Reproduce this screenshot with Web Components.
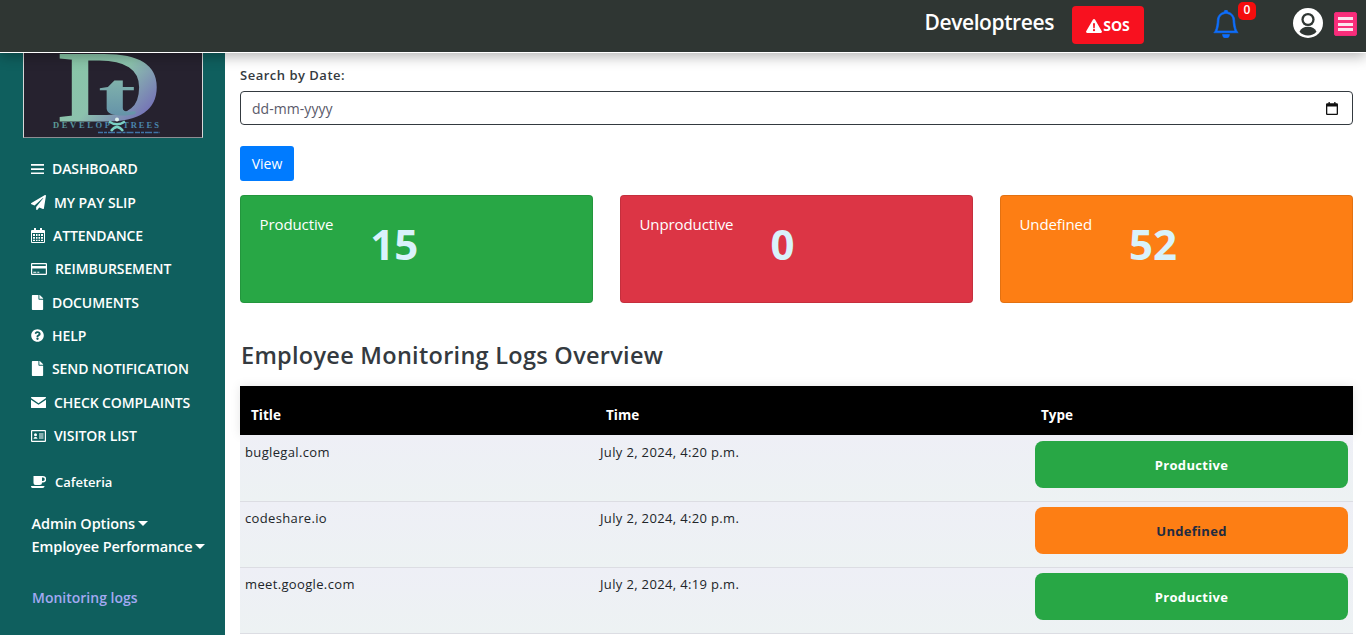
<!DOCTYPE html>
<html lang="en">
<head>
<title>Monitoring logs</title>
<style>
    html, body { margin: 0; height: 635px; overflow: hidden; background: #fff; font-family: "Open Sans", "Noto Sans", sans-serif; }
    .cards { display: grid; grid-template-columns: repeat(3, 1fr); gap: 27px; margin-top: 14px; }
</style>
</head>
<body>

<app-shell>
    <app-header slot="top"></app-header>
    <side-nav slot="side">
        <nav-item icon="bars" gap="8">DASHBOARD</nav-item>
        <nav-item icon="plane" gap="8">MY PAY SLIP</nav-item>
        <nav-item icon="calendar" gap="8">ATTENDANCE</nav-item>
        <nav-item icon="card" gap="8">REIMBURSEMENT</nav-item>
        <nav-item icon="file" gap="8">DOCUMENTS</nav-item>
        <nav-item icon="help" gap="8">HELP</nav-item>
        <nav-item icon="file" gap="8">SEND NOTIFICATION</nav-item>
        <nav-item icon="mail" gap="8">CHECK COMPLAINTS</nav-item>
        <nav-item icon="idcard" gap="8">VISITOR LIST</nav-item>
    </side-nav>
    <date-search></date-search>
    <div class="cards">
        <stat-card label="Productive" value="15" color="#28a745"></stat-card>
        <stat-card label="Unproductive" value="0" color="#dc3545"></stat-card>
        <stat-card label="Undefined" value="52" color="#fd7e14"></stat-card>
    </div>
    <log-table>
        <log-row title="buglegal.com" time="July 2, 2024, 4:20 p.m." type="Productive"></log-row>
        <log-row title="codeshare.io" time="July 2, 2024, 4:20 p.m." type="Undefined"></log-row>
        <log-row title="meet.google.com" time="July 2, 2024, 4:19 p.m." type="Productive"></log-row>
    </log-table>
</app-shell>

<script>
    const FONT = '"Open Sans", "Noto Sans", sans-serif' ;

    const ICONS = {
        bars: `<svg viewBox="0 0 13 12" width="13" height="12"><path d="M0 1h13v1.7H0zM0 5.2h13v1.7H0zM0 9.4h13v1.7H0z"/></svg>`,
        plane: `<svg viewBox="0 0 512 512" width="15" height="15"><path d="M476 3.2L12.5 270.6c-18.1 10.4-15.8 35.6 2.2 43.2L121 358.4l287.3-253.2c5.5-4.9 13.3 2.6 8.6 8.3L176 407v80.5c0 23.6 28.5 32.9 42.5 15.8L282 426l124.6 52.2c14.2 6 30.4-2.9 33-18.2l72-432C515 7.8 493.3-6.8 476 3.2z"/></svg>`,
        calendar: `<svg viewBox="0 0 14 15" width="14" height="15"><path fill-rule="evenodd" d="M3 0h2v2h4V0h2v2h2a1 1 0 0 1 1 1v11a1 1 0 0 1-1 1H1a1 1 0 0 1-1-1V3a1 1 0 0 1 1-1h2zM1 5v9h12V5zM2 6h2v2H2zM5 6h1.500v2H5zM7.500 6H9v2H7.500zM10 6h2v2h-2zM2 9h2v1.800H2zM5 9h1.500v1.800H5zM7.500 9H9v1.800H7.500zM10 9h2v1.800h-2zM2 11.800h2V13H2zM5 11.800h1.500V13H5zM7.500 11.800H9V13H7.500zM10 11.800h2V13h-2z"/></svg>`,
        card: `<svg viewBox="0 0 16 12" width="16" height="12"><path fill-rule="evenodd" d="M1 0h14a1 1 0 0 1 1 1v10a1 1 0 0 1-1 1H1a1 1 0 0 1-1-1V1a1 1 0 0 1 1-1zM1.200 1.200v1.800h13.600V1.200zM1.200 5.600v5.200h13.600V5.600zM2.300 8.800h3v1h-3zM6.300 8.800h2v1h-2z"/></svg>`,
        file: `<svg viewBox="0 0 384 512" width="13" height="15"><path d="M224 136V0H24C10.700 0 0 10.700 0 24v464c0 13.300 10.700 24 24 24h336c13.300 0 24-10.700 24-24V160H248c-13.200 0-24-10.800-24-24zm160-14.100v6.100H256V0h6.100c6.400 0 12.500 2.500 17 7l97.900 98c4.500 4.500 7 10.600 7 16.900z"/></svg>`,
        help: `<svg viewBox="0 0 512 512" width="13" height="13"><path d="M504 256c0 136.997-111.043 248-248 248S8 392.997 8 256C8 119.083 119.043 8 256 8s248 111.083 248 248zM262.655 90c-54.497 0-89.255 22.957-116.549 63.758-3.536 5.286-2.353 12.415 2.715 16.258l34.699 26.310c5.205 3.947 12.621 3.008 16.665-2.122 17.864-22.658 30.113-35.797 57.303-35.797 20.429 0 45.698 13.148 45.698 32.958 0 14.976-12.363 22.667-32.534 33.976C247.128 238.528 216 254.941 216 296v4c0 6.627 5.373 12 12 12h56c6.627 0 12-5.373 12-12v-1.333c0-28.462 83.186-29.647 83.186-106.667 0-58.002-60.165-102-116.531-102zM256 338c-25.365 0-46 20.635-46 46 0 25.364 20.635 46 46 46s46-20.636 46-46c0-25.365-20.635-46-46-46z"/></svg>`,
        mail: `<svg viewBox="0 0 15 11" width="15" height="11"><path d="M.6 0h13.800a.6.6 0 0 1 .6.600v.5L7.500 6.300 0 1.100V.6A.6.6 0 0 1 .6 0zM0 2.700l7.500 5.100L15 2.700v7.700a.6.6 0 0 1-.6.600H.6a.6.6 0 0 1-.6-.6z"/></svg>`,
        idcard: `<svg viewBox="0 0 15 12" width="15" height="12"><path fill-rule="evenodd" d="M1 0h13a1 1 0 0 1 1 1v10a1 1 0 0 1-1 1H1a1 1 0 0 1-1-1V1a1 1 0 0 1 1-1zM1.200 1.200v9.600h12.600V1.200zM2.500 8.800c.2-1.300.9-1.900 2-1.900s1.800.6 2 1.900zM4.500 3.300a1.500 1.500 0 1 1 0 3 1.500 1.500 0 0 1 0-3zM8 3.500h4.500v1H8zM8 5.500h4.500v1H8zM8 7.500h4.500v1H8z"/></svg>`,
        coffee: `<svg viewBox="0 0 15 12" width="15" height="12"><path fill-rule="evenodd" d="M2.500 0H12a3 3 0 0 1 0 6.500h-1A2.500 2.500 0 0 1 8.500 9h-4A2 2 0 0 1 2.500 7zM11 1.500v3.500h1a1.700 1.700 0 0 0 0-3.500zM0 10h13.500c0 1.200-.8 2-2 2h-10C.6 12 0 11 0 10z"/></svg>`
    } ;

    class AppShell extends HTMLElement {
        constructor() {
            super() ;
            const shadow = this.attachShadow({mode: 'open'}) ;
            shadow.innerHTML = `
            <style>
                :host { display: grid; grid-template-columns: 225px 1fr; grid-template-rows: 53px 1fr; height: 635px; overflow: hidden; }
                .top { grid-column: 1 / 3; position: relative; z-index: 2; }
                main { padding: 12px 13px 0 15px; min-width: 0; }
            </style>
            <div class="top"><slot name="top"></slot></div>
            <slot name="side"></slot>
            <main>
                <slot></slot>
            </main>
            ` ;
        }
    }

    class AppHeader extends HTMLElement {
        constructor() {
            super() ;
            const shadow = this.attachShadow({mode: 'open'}) ;
            shadow.innerHTML = `
            <style>
                :host { display: flex; align-items: center; height: 52px; box-sizing: content-box; background: #2f3633; border-bottom: 1px solid #fff; box-shadow: 0 4px 12px rgba(0,0,0,.28); justify-content: flex-end; padding-right: 9px; }
                .brand { font: 600 21px ${FONT}; color: #fff; letter-spacing: -.4px; margin: 0 18px 8px 0; }
                .sos { display: flex; align-items: center; justify-content: center; width: 72px; height: 38px; background: #f8111f; border-radius: 4px; color: #fff; font: 700 14px ${FONT}; box-sizing: border-box; padding-top: 1px; margin: 0 70px 2px 0; }
                .bell { position: relative; width: 24px; height: 28px; margin: 0 55px 4px 0; }
                .bell svg { display: block; fill: #0d6efd; stroke: #0d6efd; stroke-width: .35; }
                .badge { position: absolute; left: 24px; top: -8px; width: 18px; height: 18px; border-radius: 5px; background: #f40d0d; color: #fff; font: 600 12px/16px ${FONT}; text-align: center; }
                .user { display: block; margin: 0 11px 6px 0; }
                .burger { width: 23px; height: 24px; box-sizing: border-box; background: #f92d7a; border: 1px solid #ee2a78; border-radius: 2px; padding: 4px 3px; margin-bottom: 4px; display: flex; flex-direction: column; justify-content: space-between; }
                .burger i { display: block; height: 3px; background: #fbe3ee; }
            </style>
            <div class="brand">Developtrees</div>
            <div class="sos">
                <svg viewBox="0 0 16 14" width="16" height="14" style="margin-right:1px"><path fill="#fff" fill-rule="evenodd" d="M8 0c.4 0 .8.200 1 .6l6.800 11.600c.4.800-.1 1.800-1 1.800H1.200c-.9 0-1.400-1-1-1.800L7 .6C7.200.2 7.600 0 8 0zM7 4.300l.3 5h1.400l.3-5zM8 10.100a1.100 1.100 0 1 0 0 2.200 1.100 1.100 0 0 0 0-2.200z"/></svg>
                <span>SOS</span>
            </div>
            <div class="bell">
                <svg viewBox="0 0 16 16" width="28" height="28" style="margin:0 -2px"><path d="M8 16a2 2 0 0 0 2-2H6a2 2 0 0 0 2 2zM8 1.918l-.797.161A4.002 4.002 0 0 0 4 6c0 .628-.134 2.197-.459 3.742-.16.767-.376 1.566-.663 2.258h10.244c-.287-.692-.502-1.490-.663-2.258C12.134 8.197 12 6.628 12 6a4.002 4.002 0 0 0-3.203-3.920L8 1.917zM14.220 12c.223.447.481.801.78 1H1c.299-.199.557-.553.78-1C2.680 10.200 3 6.880 3 6c0-2.420 1.720-4.440 4.005-4.901a1 1 0 1 1 1.990 0A5.002 5.002 0 0 1 13 6c0 .880.320 4.200 1.220 6z"/></svg>
                <span class="badge">0</span>
            </div>
            <svg class="user" viewBox="0 0 30 30" width="30" height="30">
                <circle cx="15" cy="15" r="15" fill="#fff"/>
                <circle cx="15" cy="11.500" r="6.600" fill="#2f3633"/>
                <circle cx="15" cy="11.500" r="4.300" fill="#fff"/>
                <path fill="#2f3633" d="M6.500 23.800c1.500-3.500 4.300-5 8.500-5s7 1.500 8.500 5c-2.200 2.500-5.200 3.700-8.500 3.700s-6.300-1.200-8.500-3.700z"/>
            </svg>
            <div class="burger"><i></i><i></i><i></i></div>
            ` ;
        }
    }

    class SideNav extends HTMLElement {
        constructor() {
            super() ;
            const shadow = this.attachShadow({mode: 'open'}) ;
            shadow.innerHTML = `
            <style>
                :host { display: block; background: #0f5f5e; color: #fff; overflow: hidden; }
                .logo { display: block; margin-left: 23px; width: 180px; height: 85px; background: #26222f; box-sizing: border-box; border: solid #d8d8d8; border-width: 0 1px 1px 1px; border-bottom-color: #8d8d93; }
                .items { padding: 14.100px 0 0 31px; }
                .cafe { display: flex; align-items: center; font: 600 13px/20px ${FONT}; margin: 19.500px 0 0 31px; }
                .cafe svg { fill: #fff; margin-right: 9px; }
                .opt { font: 600 14.500px/23px ${FONT}; margin-left: 31.500px; display: flex; align-items: center; letter-spacing: -.1px; }
                .opt::after { content: ""; border: 5px solid transparent; border-top-color: #fff; border-bottom-width: 0; margin-left: 3px; }
                .first { margin-top: 20px; }
                .active { font: 600 14px/20px ${FONT}; color: #a3a9f2; margin: 30px 0 0 32px; }
            </style>
            <svg class="logo" viewBox="0 0 178 84">
                <defs>
                    <linearGradient id="logoGrad" x1="0" y1="0" x2="1" y2="1">
                        <stop offset="0" stop-color="#86c8a3"/>
                        <stop offset=".5" stop-color="#8cc2ad"/>
                        <stop offset=".85" stop-color="#7267b8"/>
                    </linearGradient>
                    <linearGradient id="tGrad" x1="0" y1="0" x2="0" y2="1">
                        <stop offset="0" stop-color="#8fc4ad"/>
                        <stop offset="1" stop-color="#5c88a8"/>
                    </linearGradient>
                    <linearGradient id="wordGrad" x1="0" y1="0" x2="1" y2="0">
                        <stop offset="0" stop-color="#5f9e96"/>
                        <stop offset="1" stop-color="#4a86ad"/>
                    </linearGradient>
                </defs>
                <text x="33" y="67" font-family="Liberation Serif, serif" font-size="100" textLength="104" lengthAdjust="spacingAndGlyphs" fill="url(#logoGrad)" stroke="url(#logoGrad)" stroke-width="2">D</text>
                <text x="74" y="62" font-family="Liberation Serif, serif" font-weight="700" font-size="62" textLength="38" lengthAdjust="spacingAndGlyphs" fill="url(#tGrad)">t</text>
                <text x="29" y="75" font-family="Liberation Serif, serif" font-size="8.500" font-weight="700" textLength="57" fill="url(#wordGrad)">DEVELOP</text>
                <text x="99" y="75" font-family="Liberation Serif, serif" font-size="8.500" font-weight="700" textLength="36" fill="#4a86ad">TREES</text>
                <path d="M74 79.500h62" stroke="#3f74a8" stroke-width="1.400" stroke-dasharray="5 1 3 1 7 1.500"/>
                <path d="M85 68.500Q93 74 101 68.500M87 78Q93 70 99 78" fill="none" stroke="#7ad0c4" stroke-width="2.400"/>
                <circle cx="93" cy="66.500" r="2" fill="#dff2ee"/>
            </svg>
            <div class="items"><slot></slot></div>
            <div class="cafe">${ICONS.coffee}<span>Cafeteria</span></div>
            <div class="opt first">Admin Options</div>
            <div class="opt">Employee Performance</div>
            <div class="active">Monitoring logs</div>
            ` ;
        }
    }

    class NavItem extends HTMLElement {
        constructor() {
            super() ;
            const shadow = this.attachShadow({mode: 'open'}) ;
            shadow.innerHTML = `
            <style>
                :host { display: flex; align-items: center; height: 33.350px; font: 600 14px ${FONT}; color: #fff; white-space: nowrap; letter-spacing: -.1px; }
                svg { fill: #fff; display: block; }
                .ic { display: block; }
            </style>
            <span class="ic"></span><slot></slot>
            ` ;
        }
        connectedCallback() {
            const ic = this.shadowRoot.querySelector('.ic') ;
            ic.innerHTML = ICONS[this.getAttribute('icon')] ;
            ic.style.marginRight = this.getAttribute('gap') + 'px' ;
        }
    }

    class DateSearch extends HTMLElement {
        constructor() {
            super() ;
            const shadow = this.attachShadow({mode: 'open'}) ;
            shadow.innerHTML = `
            <style>
                :host { display: block; }
                label { display: block; font: 600 13px/20px ${FONT}; color: #343a40; letter-spacing: .5px; margin-bottom: 6px; }
                .field { display: flex; align-items: center; justify-content: space-between; height: 34px; box-sizing: border-box; border: 1px solid #343a40; border-radius: 4px; padding: 0 14px 0 11px; font: 400 14px ${FONT}; color: #5a5a6a; letter-spacing: .05px; }
                .btn { display: flex; align-items: center; justify-content: center; width: 54px; height: 35px; background: #007bff; color: #fff; border-radius: 3px; font: 400 14px ${FONT}; margin-top: 21px; }
            </style>
            <label>Search by Date:</label>
            <div class="field">
                <span>dd-mm-yyyy</span>
                <svg viewBox="0 0 12 13" width="12" height="13"><path fill="#111" fill-rule="evenodd" d="M2.500 0h1.300v1.300h4.400V0h1.300v1.300h1A1.300 1.300 0 0 1 12 2.600v9A1.300 1.300 0 0 1 10.500 13h-9A1.300 1.300 0 0 1 0 11.600v-9a1.300 1.300 0 0 1 1.500-1.300h1zM1.300 4.500v7.200h9.400V4.500z"/></svg>
            </div>
            <div class="btn">View</div>
            ` ;
        }
    }

    class StatCard extends HTMLElement {
        constructor() {
            super() ;
            const shadow = this.attachShadow({mode: 'open'}) ;
            shadow.innerHTML = `
            <style>
                :host { display: flex; gap: 37px; height: 108px; box-sizing: border-box; border-radius: 4px; padding: 18px 18.500px; border: 1px solid rgba(0,0,0,.1); color: #fff; }
                .label { font: 400 15px/20px ${FONT}; letter-spacing: -.1px; }
                .value { font: 700 42px/1 ${FONT}; color: #d9f2fb; margin-top: 9px; }
            </style>
            <div class="label"></div><div class="value"></div>
            ` ;
        }
        connectedCallback() {
            this.shadowRoot.querySelector('.label').textContent = this.getAttribute('label') ;
            this.shadowRoot.querySelector('.value').textContent = this.getAttribute('value') ;
            this.style.background = this.getAttribute('color') ;
        }
    }

    class LogTable extends HTMLElement {
        constructor() {
            super() ;
            const shadow = this.attachShadow({mode: 'open'}) ;
            shadow.innerHTML = `
            <style>
                :host { display: block; }
                h2 { font: 600 23.500px/32px ${FONT}; color: #343a40; margin: 36px 0 15px 1px; letter-spacing: .28px; }
                .head { display: grid; grid-template-columns: 355px 435px 1fr; height: 49px; background: #000; color: #fff; font: 700 13.500px/1 ${FONT}; box-shadow: 0 0 10px rgba(0,0,0,.1); align-items: center; padding-top: 10px; box-sizing: border-box; }
                .head span { padding-left: 11px; }
            </style>
            <h2>Employee Monitoring Logs Overview</h2>
            <div class="head"><span>Title</span><span>Time</span><span>Type</span></div>
            <slot></slot>
            ` ;
        }
    }

    class LogRow extends HTMLElement {
        constructor() {
            super() ;
            const shadow = this.attachShadow({mode: 'open'}) ;
            shadow.innerHTML = `
            <style>
                :host { display: grid; grid-template-columns: 355px 435px 1fr; height: 66px; box-sizing: border-box; border-top: 1px solid #dcdde3; background: linear-gradient(#eeeff6, #edf2f3); font: 400 13px/18px ${FONT}; color: #212529; letter-spacing: .35px; }
                :host(:first-of-type) { border-top-color: #eeeff6; }
                :host(:last-of-type) { height: 67px; border-bottom: 1px solid #dcdde3; }
                span { padding: 7px 0 0 5px; }
                .pill { margin: 5px 5px 0 5px; height: 47px; box-sizing: border-box; padding-top: 1px; border-radius: 8px; display: flex; align-items: center; justify-content: center; font: 700 13px ${FONT}; letter-spacing: .3px; }
                .Productive { background: #28a745; color: #fff; }
                .Undefined { background: #fd7e14; color: #212b40; }
            </style>
            <span class="t"></span><span class="d"></span><div class="pill"></div>
            ` ;
        }
        connectedCallback() {
            const r = this.shadowRoot ;
            r.querySelector('.t').textContent = this.getAttribute('title') ;
            r.querySelector('.d').textContent = this.getAttribute('time') ;
            const pill = r.querySelector('.pill') ;
            pill.textContent = this.getAttribute('type') ;
            pill.classList.add(this.getAttribute('type')) ;
        }
    }

    customElements.define('app-shell', AppShell) ;
    customElements.define('app-header', AppHeader) ;
    customElements.define('side-nav', SideNav) ;
    customElements.define('nav-item', NavItem) ;
    customElements.define('date-search', DateSearch) ;
    customElements.define('stat-card', StatCard) ;
    customElements.define('log-table', LogTable) ;
    customElements.define('log-row', LogRow) ;
</script>

</body>
</html>
